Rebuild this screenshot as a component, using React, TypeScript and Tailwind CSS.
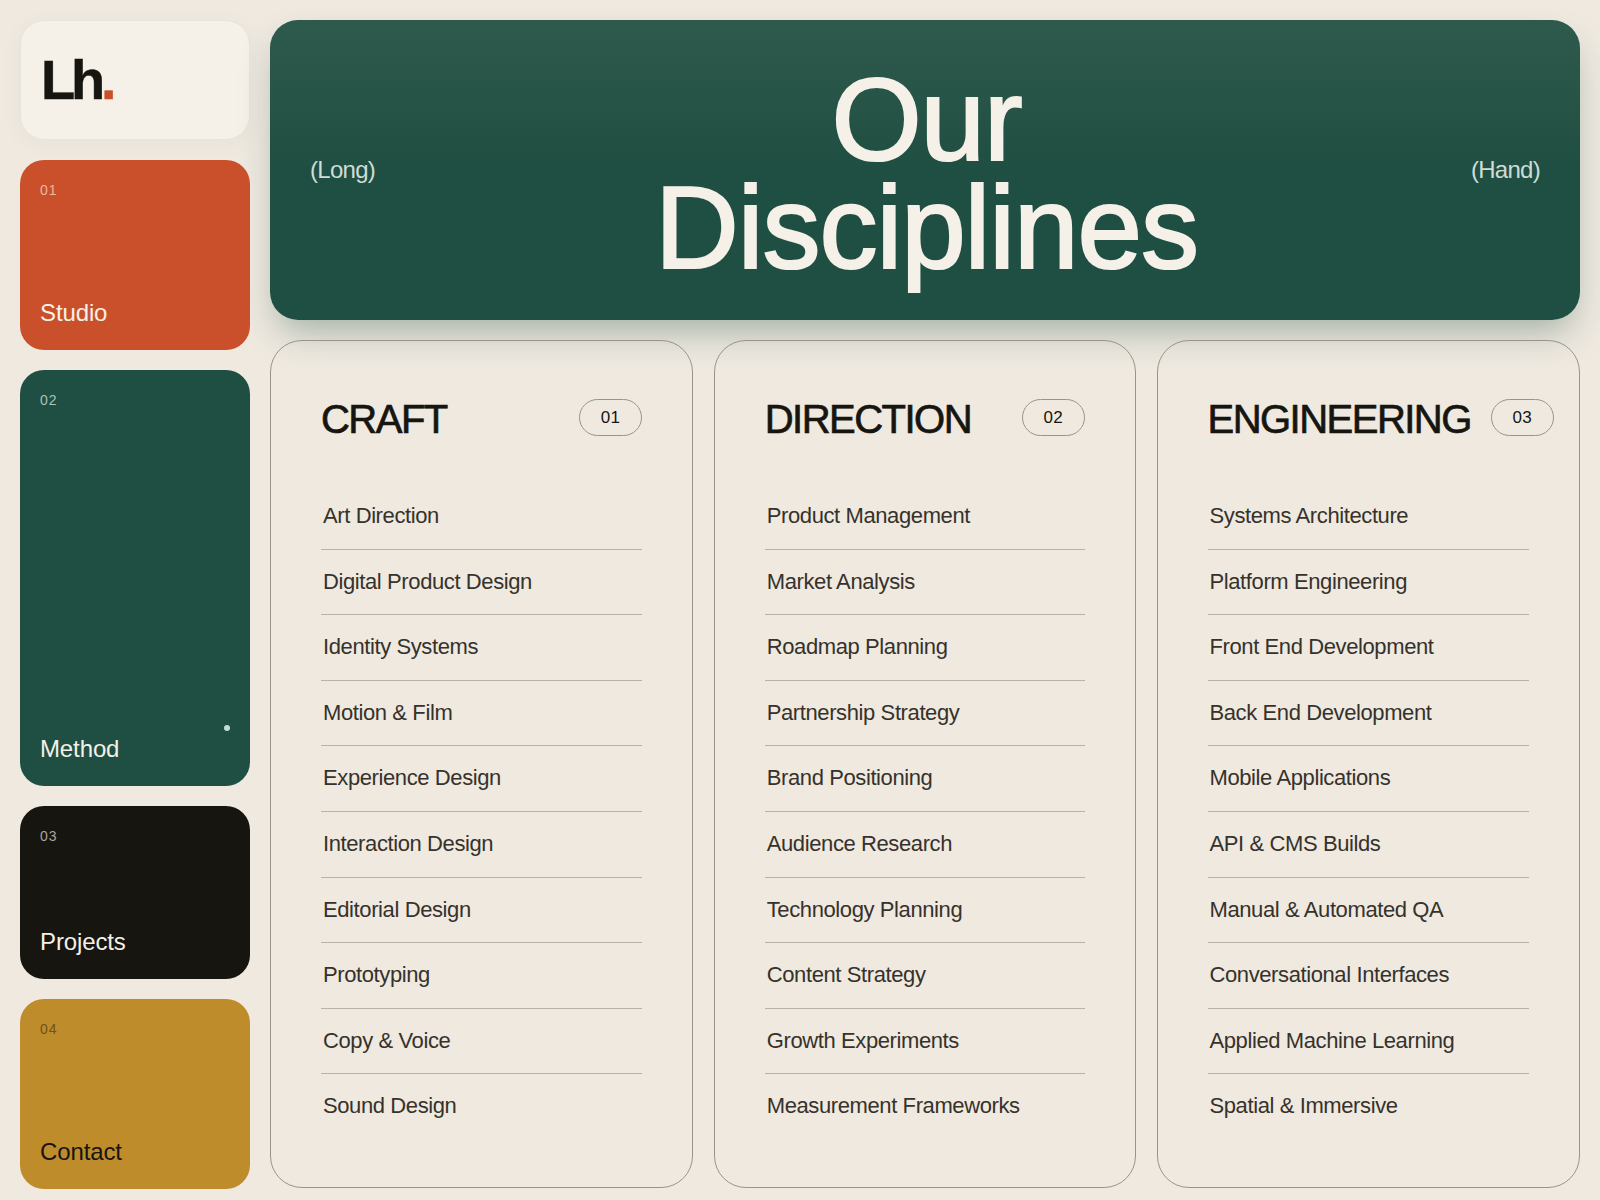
const font = "font-['Liberation_Sans',Arial,sans-serif]";

const columns = [
  { title: "CRAFT", num: "01", items: ["Art Direction", "Digital Product Design", "Identity Systems", "Motion & Film", "Experience Design", "Interaction Design", "Editorial Design", "Prototyping", "Copy & Voice", "Sound Design"] },
  { title: "DIRECTION", num: "02", items: ["Product Management", "Market Analysis", "Roadmap Planning", "Partnership Strategy", "Brand Positioning", "Audience Research", "Technology Planning", "Content Strategy", "Growth Experiments", "Measurement Frameworks"] },
  { title: "ENGINEERING", num: "03", items: ["Systems Architecture", "Platform Engineering", "Front End Development", "Back End Development", "Mobile Applications", "API & CMS Builds", "Manual & Automated QA", "Conversational Interfaces", "Applied Machine Learning", "Spatial & Immersive"] },
];

function NavCard({ num, label, className, numClass, dot }: { num: string; label: string; className: string; numClass: string; dot?: boolean }) {
  return (
    <div className={`relative flex flex-col justify-between rounded-[24px] px-5 pt-5 pb-[22px] ${className}`}>
      <span className={`text-[14px] leading-5 tracking-[0.07em] ${numClass}`}>{num}</span>
      <span className="text-[24px] leading-[30px] tracking-[-0.005em]">{label}</span>
      {dot && <span className="absolute right-5 bottom-[55px] h-[6px] w-[6px] rounded-full bg-[#c3dcd5]" />}
    </div>
  );
}

export default function App() {
  return (
    <div className={`${font} flex min-h-screen gap-5 bg-[#efe9e0] px-5 pt-5 pb-3`}>
      <aside className="flex w-[230px] shrink-0 flex-col gap-5">
        <div className="flex h-[120px] items-center rounded-[24px] border border-[#e9e3d9] bg-[#f5f0e8] px-5 shadow-[0_4px_24px_rgba(60,50,30,0.04)]">
          <span className="text-[56px] leading-none font-bold tracking-[-0.075em] text-[#161510] [-webkit-text-stroke:0.5px]">
            Lh<span className="text-[#c9502a]">.</span>
          </span>
        </div>
        <NavCard num="01" label="Studio" className="h-[190px] bg-[#c9502a] text-[#f5f0e8]" numClass="text-[#eeb79c]" />
        <NavCard num="02" label="Method" dot className="h-[416px] bg-[#1f4f42] text-[#f5f0e8]" numClass="text-[#a9c2ba]" />
        <NavCard num="03" label="Projects" className="h-[173px] bg-[#161510] text-[#f5f0e8]" numClass="text-[#a8a59e]" />
        <NavCard num="04" label="Contact" className="h-[190px] bg-[#bf8c2c] text-[#161510]" numClass="text-[#6f5218]" />
      </aside>

      <main className="flex min-w-0 flex-1 flex-col gap-5">
        <header className="flex h-[300px] items-center justify-between rounded-[28px] bg-gradient-to-b from-[#2e5a4d] to-[#1f4f42] to-50% px-10 text-[#f5f0e8] shadow-[0_18px_36px_-8px_rgba(31,79,66,0.38)]">
          <span className="text-[24px] leading-none tracking-[-0.03em] text-[#cfdcd6]">(Long)</span>
          <h1 className="pt-[8px] pl-[7px] text-center text-[116px] leading-[108px] font-normal tracking-[-0.009em] [-webkit-text-stroke:2.2px_#f5f0e8]">
            Our<br />Disciplines
          </h1>
          <span className="text-[24px] leading-none tracking-[-0.03em] text-[#cfdcd6]">(Hand)</span>
        </header>

        <section className="grid h-[848px] grid-cols-[423px_422px_423.5px] gap-x-[20.75px]">
          {columns.map((c) => (
            <div key={c.title} className="min-w-0 rounded-[32px] border border-[#9a9488] px-[50px] pt-[50px]">
              <div className="mb-[38px] flex h-[55px] items-center justify-between gap-5 whitespace-nowrap">
                <h2 className="pt-[2px] text-[40px] leading-[55px] font-normal tracking-[-0.038em] text-[#161510] [-webkit-text-stroke:0.7px_#161510]">{c.title}</h2>
                <span className="-mt-[2px] flex h-[37px] w-[63px] shrink-0 items-center justify-center rounded-full border border-[#9a9488] text-[17px] tracking-[0.02em] text-[#161510]">{c.num}</span>
              </div>
              <ul>
                {c.items.map((it, i) => (
                  <li key={it} className={`px-[2px] py-[18px] text-[22px] leading-[1.3] tracking-[-0.018em] text-[#36322b] ${i < 9 ? "border-b border-[#b9b2a6]" : ""}`}>{it}</li>
                ))}
              </ul>
            </div>
          ))}
        </section>
      </main>
    </div>
  );
}
